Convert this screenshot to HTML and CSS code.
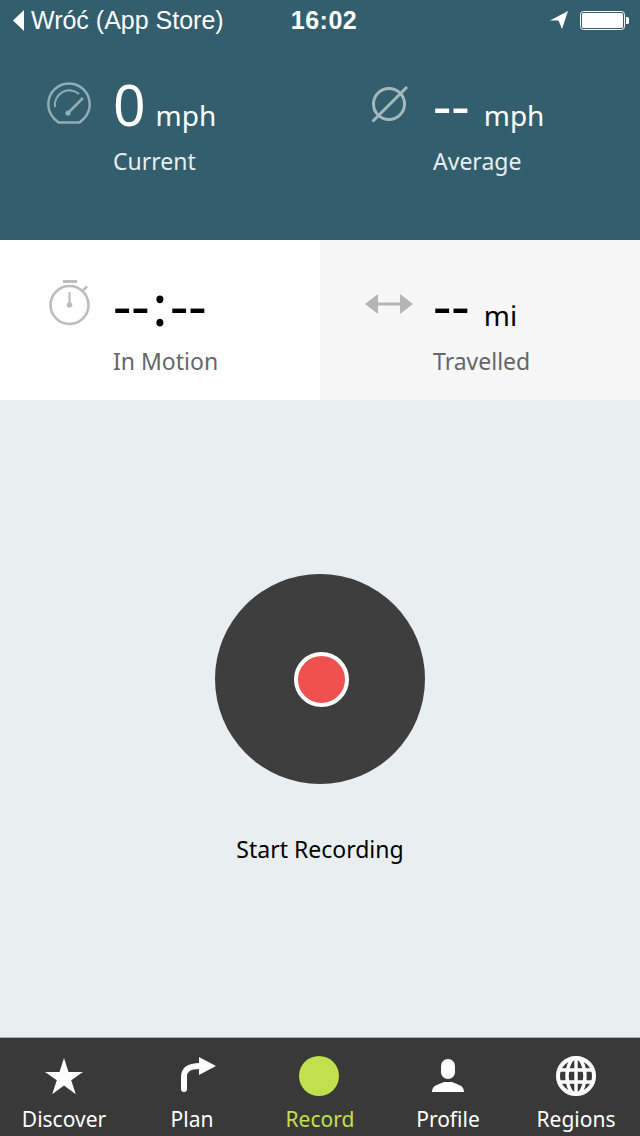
FILE: index.html
```html
<!DOCTYPE html>
<html lang="en">
<head>
    <meta charset="UTF-8">
    <meta name="viewport" content="width=device-width, initial-scale=1.0">
    <title>Record</title>
    <link rel="stylesheet" href="styles.css">
</head>
<body>
    <div class="app">
        <header class="header">
            <div class="status-bar">
                <div class="status-left">
                    <svg class="back-icon" width="11" height="21" viewBox="0 0 11 21"><path d="M11 0V21L0 10.5Z" fill="#fff"/></svg>
                    <span>Wróć (App Store)</span>
                </div>
                <div class="status-time">16:02</div>
                <div class="status-right">
                    <svg width="18" height="18" viewBox="0 0 18 18"><path d="M18 0L0 9.5H8.5L12 18Z" fill="#fff"/></svg>
                    <svg class="battery" width="49" height="19" viewBox="0 0 49 19">
                        <rect x="0.5" y="0.5" width="44" height="18" rx="3" fill="none" stroke="#fff"/>
                        <rect x="2" y="2" width="41" height="15" rx="1.5" fill="#fff"/>
                        <path d="M46 6H47.5Q49 6 49 7.5V11.5Q49 13 47.5 13H46Z" fill="#fff"/>
                    </svg>
                </div>
            </div>
            <div class="stats">
                <div class="stat stat-dark">
                    <svg class="stat-icon" width="48" height="48" viewBox="0 0 48 48" fill="none" stroke="#92adb6">
                        <path d="M9 39.5A20.7 20.7 0 1 1 39 39.5L34.5 43.5H13.5Z" stroke-width="2.5" stroke-linejoin="round"/>
                        <path d="M10 28A14.5 14.5 0 0 1 34 15" stroke-width="2"/>
                        <path d="M23 34L38 19" stroke-width="2.5"/>
                        <circle cx="23" cy="34" r="2.6" fill="#92adb6" stroke="none"/>
                    </svg>
                    <div>
                        <div class="value"><span class="number">0</span><span class="unit">mph</span></div>
                        <div class="label">Current</div>
                    </div>
                </div>
                <div class="stat stat-dark">
                    <svg class="stat-icon" width="48" height="48" viewBox="0 0 48 48" fill="none" stroke="#a3b9c0" stroke-width="3">
                        <circle cx="24" cy="25" r="15.5"/>
                        <path d="M7.5 42.5L42 8"/>
                    </svg>
                    <div>
                        <div class="value"><span class="number">--</span><span class="unit unit-dash">mph</span></div>
                        <div class="label">Average</div>
                    </div>
                </div>
            </div>
        </header>
        <section class="stats">
            <div class="stat stat-white">
                <svg class="stat-icon" width="48" height="48" viewBox="0 0 48 48" fill="none" stroke="#bdbdbd">
                    <circle cx="24.5" cy="26" r="19" stroke-width="2.6"/>
                    <path d="M18 2.5H32" stroke-width="3"/>
                    <path d="M38 11.5L42 7.5" stroke-width="2.5"/>
                    <path d="M24.5 13V26" stroke-width="2.2"/>
                    <circle cx="24.5" cy="26" r="2.8" fill="#bdbdbd" stroke="none"/>
                </svg>
                <div>
                    <div class="value"><span class="number">--<span class="colon">:</span>--</span></div>
                    <div class="label">In Motion</div>
                </div>
            </div>
            <div class="stat stat-grey">
                <svg class="stat-icon" width="48" height="48" viewBox="0 0 48 48" fill="#b5b5b5">
                    <path d="M0 25L13 15V35Z"/>
                    <path d="M48 25L35 15V35Z"/>
                    <rect x="13" y="23.5" width="22" height="3"/>
                </svg>
                <div>
                    <div class="value"><span class="number">--</span><span class="unit unit-dash">mi</span></div>
                    <div class="label">Travelled</div>
                </div>
            </div>
        </section>
        <main class="record">
            <div class="record-button"><div class="record-dot"></div></div>
            <div class="record-label">Start Recording</div>
        </main>
        <nav class="tabs">
            <div class="tab">
                <svg width="48" height="40" viewBox="-4 0 48 40"><path d="M20 2L24.5 15.9H39L27.2 24.3L31.8 38.2L20 29.6L8.2 38.2L12.8 24.3L1 15.9H15.5Z" fill="#fff"/></svg>
                <span>Discover</span>
            </div>
            <div class="tab">
                <svg width="48" height="40" viewBox="0 0 48 40">
                    <path d="M16 33V21C16 14 20 10 32 10" fill="none" stroke="#fff" stroke-width="6" stroke-linecap="round"/>
                    <path d="M31 1L48 10L31 19Z" fill="#fff"/>
                </svg>
                <span>Plan</span>
            </div>
            <div class="tab tab-active">
                <svg width="48" height="40" viewBox="0 0 48 40"><circle cx="23" cy="20" r="20" fill="#c0e04c"/></svg>
                <span>Record</span>
            </div>
            <div class="tab">
                <svg width="48" height="40" viewBox="0 0 48 40" fill="#fff">
                    <rect x="17" y="3" width="14" height="20" rx="7"/>
                    <path d="M8 36C8 29 14 29 20 26H28C34 29 40 29 40 36Z"/>
                </svg>
                <span>Profile</span>
            </div>
            <div class="tab">
                <svg width="48" height="40" viewBox="0 0 48 40" fill="none" stroke="#fff" stroke-width="3.4">
                    <circle cx="24" cy="20" r="18" stroke-width="4"/>
                    <ellipse cx="24" cy="20" rx="9" ry="18"/>
                    <path d="M24 2V38M8 14H40M8 26H40"/>
                </svg>
                <span>Regions</span>
            </div>
        </nav>
    </div>
</body>
</html>
```

FILE: styles.css
```css
body {
    margin: 0;
    font-family: "Noto Sans", Arial, sans-serif;
    background-color: #e9eef1;
}
.app {
    display: flex;
    flex-direction: column;
    width: 640px;
    height: 1136px;
    overflow: hidden;
}
.header {
    background-color: #325e6e;
    color: #fff;
}
.status-bar {
    display: flex;
    align-items: center;
    height: 40px;
    padding: 0 11px 0 13px;
    font-family: "Liberation Sans", Arial, sans-serif;
    font-size: 25px;
}
.status-left {
    display: flex;
    flex: 1;
    align-items: center;
    gap: 7px;
}
.status-time {
    margin-left: 6px;
    font-weight: 700;
    letter-spacing: 0.5px;
}
.status-right {
    display: flex;
    flex: 1;
    align-items: center;
    justify-content: flex-end;
    gap: 12px;
}
.stats {
    display: flex;
    height: 160px;
    flex-shrink: 0;
}
.header .stats {
    height: 200px;
}
.stat {
    display: flex;
    flex: 1;
    gap: 20px;
    padding: 31px 0 0 45px;
    box-sizing: border-box;
}
.stat-white {
    background-color: #fff;
}
.stat-grey {
    background-color: #f7f7f7;
}
.stat-icon {
    flex-shrink: 0;
    margin-top: 8px;
}
.value {
    display: flex;
    align-items: baseline;
    height: 66px;
    line-height: 66px;
    color: #000;
}
.stat-dark .value {
    color: #fff;
}
.number {
    font-size: 57px;
}
.colon {
    margin: 0 2.5px;
}
.unit {
    margin-left: 10px;
    font-size: 28px;
}
.unit-dash {
    margin-left: 14px;
}
.label {
    margin-top: 8px;
    font-size: 23px;
    line-height: 32px;
    color: #666;
}
.stat-dark .label {
    color: #e8eef0;
}
.record {
    display: flex;
    flex: 1;
    flex-direction: column;
    align-items: center;
    justify-content: center;
    padding-top: 2px;
}
.record-button {
    display: flex;
    align-items: center;
    justify-content: center;
    width: 210px;
    height: 210px;
    border-radius: 50%;
    background-color: #3e3e3e;
}
.record-dot {
    width: 47px;
    height: 47px;
    margin: 2px 0 0 2px;
    border: 4.5px solid #fff;
    border-radius: 50%;
    background-color: #ef5050;
}
.record-label {
    margin-top: 48px;
    font-size: 23px;
    line-height: 34px;
    color: #000;
}
.tabs {
    display: flex;
    flex-shrink: 0;
    height: 99px;
    box-sizing: border-box;
    border-top: 1px solid #a9adb0;
    background-color: #393939;
}
.tab {
    display: flex;
    flex: 1;
    flex-direction: column;
    align-items: center;
    padding-top: 18px;
    font-size: 21px;
    line-height: 32px;
    color: #fff;
}
.tab svg {
    display: block;
    margin-bottom: 7px;
}
.tab-active {
    color: #c0e04c;
}
```
